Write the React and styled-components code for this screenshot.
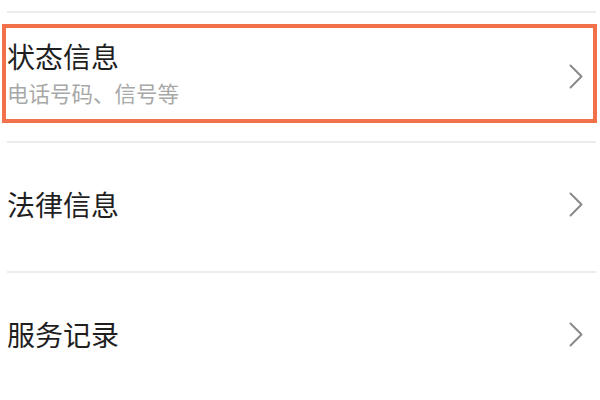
import React from 'react'
import styled, { createGlobalStyle } from 'styled-components'

const GlobalStyle = createGlobalStyle`
  html, body {
    margin: 0;
    padding: 0;
    background: #fff;
  }
  body {
    font-family: "Noto Sans CJK SC", "Noto Sans", sans-serif;
  }
`

const List = styled.div`
  padding: 11px 4px 0 7px;
`

const Row = styled.div`
  position: relative;
  display: flex;
  align-items: center;
  justify-content: space-between;
  box-sizing: border-box;
  height: 130px;
  border-top: 2px solid #ececec;
  padding-right: 13px;
  padding-bottom: ${p => (p.$marked ? '10px' : '5px')};
`

const Text = styled.div`
  display: flex;
  flex-direction: column;
`

const Title = styled.div`
  font-size: 28px;
  line-height: 41px;
  color: #1f1f1f;
`

const Subtitle = styled.div`
  font-size: 21.5px;
  line-height: 31px;
  color: #a8a8a8;
`

const ChevronBox = styled.div`
  display: flex;
  margin-bottom: ${p => (p.$marked ? '-8px' : '0')};
`

const Highlight = styled.div`
  position: absolute;
  left: -5px;
  right: -1px;
  top: 11px;
  height: 99px;
  box-sizing: border-box;
  border: 4px solid #f2704a;
  pointer-events: none;
`

const Chevron = () => (
  <svg width="14" height="25" viewBox="0 0 14 25">
    <polyline
      points="1.5,1.5 12.5,12.5 1.5,23.5"
      fill="none"
      stroke="#8a8a8a"
      strokeWidth="2"
      strokeLinecap="round"
      strokeLinejoin="round"
    />
  </svg>
)

const items = [
  { title: '状态信息', sub: '电话号码、信号等', marked: true },
  { title: '法律信息' },
  { title: '服务记录' },
]

export default function App() {
  return (
    <>
      <GlobalStyle />
      <List>
        {items.map(item => (
          <Row key={item.title} $marked={item.marked}>
            <Text>
              <Title>{item.title}</Title>
              {item.sub && <Subtitle>{item.sub}</Subtitle>}
            </Text>
            <ChevronBox $marked={item.marked}>
              <Chevron />
            </ChevronBox>
            {item.marked && <Highlight />}
          </Row>
        ))}
      </List>
    </>
  )
}
